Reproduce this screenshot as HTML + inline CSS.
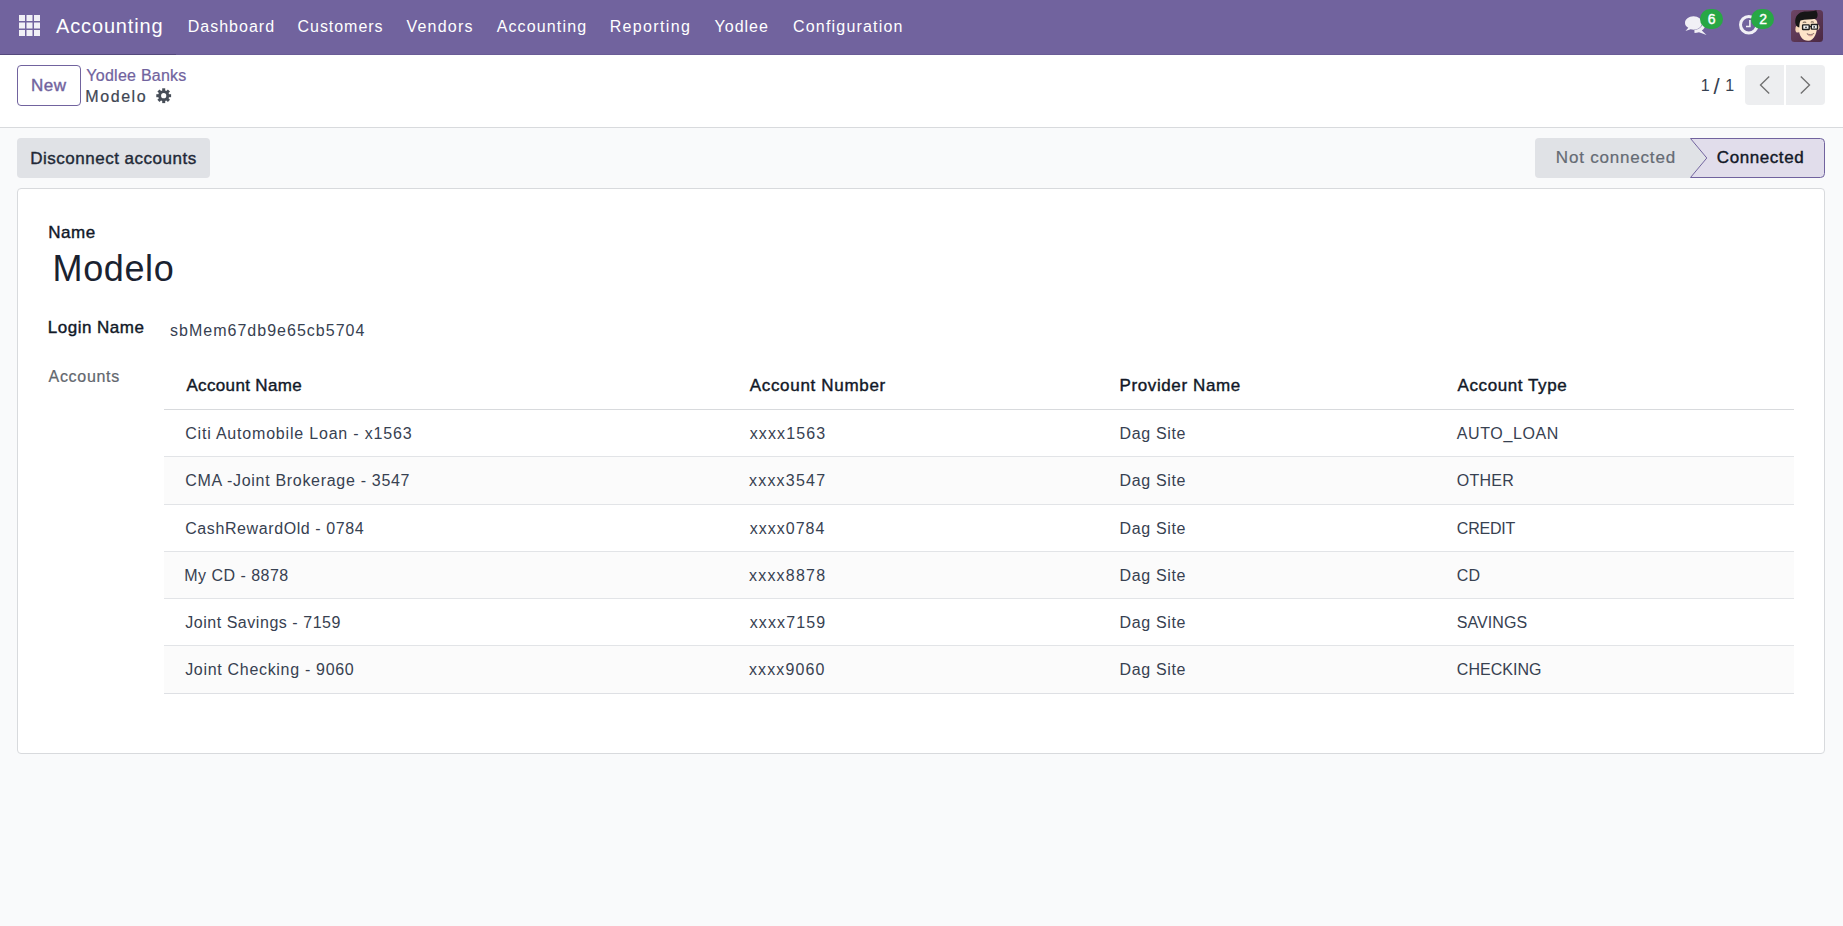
<!DOCTYPE html>
<html><head><meta charset="utf-8">
<style>
html,body{margin:0;padding:0;width:1843px;height:926px;overflow:hidden;background:#f9fafb;font-family:"Liberation Sans",sans-serif;}
.t{position:absolute;white-space:nowrap;}
.r{position:absolute;}
</style></head><body>
<!-- navbar -->
<div class="r" style="left:0;top:0;width:1843px;height:55px;background:#71639e"></div>
<div class="r" style="left:0;top:54px;width:1843px;height:1px;background:#6a5c96"></div>
<div class="r" style="left:0;top:54px;width:176px;height:1px;background:#54497c"></div>
<svg class="r" style="left:19px;top:15px" width="21" height="21" viewBox="0 0 21 21">
<g fill="#f1f0f6">
<rect x="0" y="0" width="6" height="6"/><rect x="7.5" y="0" width="6" height="6"/><rect x="15" y="0" width="6" height="6"/>
<rect x="0" y="7.5" width="6" height="6"/><rect x="7.5" y="7.5" width="6" height="6"/><rect x="15" y="7.5" width="6" height="6"/>
<rect x="0" y="15" width="6" height="6"/><rect x="7.5" y="15" width="6" height="6"/><rect x="15" y="15" width="6" height="6"/>
</g></svg>
<!-- chat icon -->
<svg class="r" style="left:1680px;top:10px" width="32" height="30" viewBox="0 0 32 30">
<g fill="#f1f0f6">
<path d="M14,9 C20,9 25,11.5 25,15.5 C25,17.5 23.8,19.2 21.8,20.4 L26.5,25 L19,22.3 C17.5,22.7 16,22.9 14.5,22.9 Z"/>
<ellipse cx="13.5" cy="13" rx="9" ry="6.9" fill="#71639e"/>
<path d="M13.5,6.3 C18.2,6.3 22,9.3 22,13 C22,16.7 18.2,19.7 13.5,19.7 C12.5,19.7 11.5,19.6 10.6,19.3 L5.5,21 L8.3,17.8 C6.2,16.6 5,14.9 5,13 C5,9.3 8.8,6.3 13.5,6.3 Z"/>
</g></svg>
<!-- clock icon -->
<svg class="r" style="left:1736px;top:12px" width="26" height="26" viewBox="0 0 26 26">
<circle cx="12.8" cy="12.8" r="8.3" fill="none" stroke="#f1f0f6" stroke-width="3"/>
<path d="M13.9,8 V14.5 H10" fill="none" stroke="#f1f0f6" stroke-width="1.6"/>
</svg>
<!-- badges -->
<div class="r" style="left:1700px;top:8.7px;width:23px;height:20.4px;border-radius:11px;background:#28a745"></div>
<div class="r" style="left:1751px;top:8.7px;width:23px;height:20.4px;border-radius:11px;background:#28a745"></div>
<!-- avatar -->
<svg class="r" style="left:1791px;top:10px" width="32" height="32" viewBox="0 0 32 32">
<defs><linearGradient id="ag" x1="0" y1="0" x2="1" y2="1"><stop offset="0" stop-color="#6d4565"/><stop offset="1" stop-color="#4b2943"/></linearGradient></defs>
<rect x="0" y="0" width="32" height="32" rx="3.5" fill="url(#ag)"/>
<ellipse cx="6.6" cy="19.2" rx="2.2" ry="3.4" fill="#f5d5b8"/>
<ellipse cx="26.9" cy="17.3" rx="1.5" ry="2.8" fill="#f5d5b8"/>
<path d="M7.8,11 C8,8.5 11,8 16.5,8 C22.5,8 26.3,9 26.3,13 C26.6,22 23.5,30.8 17.2,30.8 C11.5,30.8 8,26 7.8,19 Z" fill="#fde4c8"/>
<path d="M4.3,13 C3.6,6.5 7.5,2.2 13.5,1.6 C18,1.2 22,1.6 25.5,0.2 C25.2,1.5 26.8,2.8 26.6,5 C26.4,7.5 25.8,8.6 24.5,8.8 C20,9.5 14,9.2 9.5,10.5 C8.6,12.5 8.4,15 8.3,17.5 C6.5,17 4.7,15.5 4.3,13 Z" fill="#161616"/>
<path d="M11.8,12.6 C12.8,12 14.2,12 15.2,12.5 M19.8,12.2 C20.8,11.7 22,11.8 22.8,12.3" stroke="#3a2a22" stroke-width="0.9" fill="none"/>
<rect x="11.6" y="14.9" width="6.6" height="4.6" rx="0.6" fill="#f4f4f4" stroke="#1e1e1e" stroke-width="1.4"/>
<rect x="20.3" y="14.5" width="6.2" height="4.6" rx="0.6" fill="#f4f4f4" stroke="#1e1e1e" stroke-width="1.4"/>
<path d="M18.2,16.6 H20.3" stroke="#1e1e1e" stroke-width="1.1"/>
<circle cx="15" cy="17.3" r="0.9" fill="#333"/><circle cx="23.2" cy="16.9" r="0.9" fill="#333"/>
<path d="M16,23.6 C18,25 21,24.9 22.8,23.3 C22.2,25.6 16.8,25.9 16,23.6 Z" fill="#fff" stroke="#6b4a44" stroke-width="0.6"/>
<path d="M17.5,25.4 C19,26.1 20.6,26 21.6,25.2" stroke="#d98e8e" stroke-width="0.8" fill="none"/>
</svg>
<!-- control panel -->
<div class="r" style="left:0;top:55px;width:1843px;height:72px;background:#fff"></div>
<div class="r" style="left:0;top:127px;width:1843px;height:1px;background:#d8dadd"></div>
<div class="r" style="left:17px;top:65px;width:62px;height:39px;border:1px solid #71639e;border-radius:4px;box-sizing:content-box"></div>
<!-- gear -->
<svg class="r" style="left:155px;top:87px" width="17" height="17" viewBox="-8.7 -8.7 17 17">
<g fill="#474e58">
<circle r="5.5"/>
<rect x="-1.5" y="-7.4" width="3" height="14.8"/>
<rect x="-1.5" y="-7.4" width="3" height="14.8" transform="rotate(45)"/>
<rect x="-1.5" y="-7.4" width="3" height="14.8" transform="rotate(90)"/>
<rect x="-1.5" y="-7.4" width="3" height="14.8" transform="rotate(135)"/>
</g>
<circle r="2.6" fill="#fff"/>
</svg>
<!-- pager -->
<div class="r" style="left:1745px;top:65px;width:39px;height:40px;background:#edeef0;border-radius:4px 0 0 4px"></div>
<div class="r" style="left:1786px;top:65px;width:39px;height:40px;background:#edeef0;border-radius:0 4px 4px 0"></div>
<svg class="r" style="left:1755px;top:72px" width="20" height="26" viewBox="0 0 20 26">
<path d="M14.2,4.5 L5.5,13 L14.2,21.5" fill="none" stroke="#707070" stroke-width="1.35"/></svg>
<svg class="r" style="left:1796px;top:72px" width="20" height="26" viewBox="0 0 20 26">
<path d="M4.8,4.5 L13.5,13 L4.8,21.5" fill="none" stroke="#707070" stroke-width="1.35"/></svg>

<!-- action row -->
<div class="r" style="left:17px;top:138px;width:193px;height:40px;background:#e0e2e6;border-radius:4px"></div>
<svg class="r" style="left:1535px;top:138px" width="290" height="40" viewBox="0 0 290 40">
<path d="M4,0 H155 L171.5,20 L155,40 H4 Q0,40 0,36 V4 Q0,0 4,0 Z" fill="#e0e2e6"/>
<path d="M155.5,0.5 H285.5 Q289.5,0.5 289.5,4.5 V35.5 Q289.5,39.5 285.5,39.5 H155.5 L171.8,20 Z" fill="#e1ddeb" stroke="#71639e" stroke-width="1"/>
</svg>

<!-- card -->
<div class="r" style="left:17px;top:188px;width:1806px;height:564px;background:#fff;border:1px solid #d8dadd;border-radius:4px;box-sizing:content-box"></div>
<!-- table lines & stripes -->
<div class="r" style="left:164px;top:457px;width:1630px;height:47px;background:#fbfbfb"></div>
<div class="r" style="left:164px;top:552px;width:1630px;height:46px;background:#fbfbfb"></div>
<div class="r" style="left:164px;top:646px;width:1630px;height:47px;background:#fbfbfb"></div>
<div class="r" style="left:164px;top:409px;width:1630px;height:1px;background:#d8dadd"></div>
<div class="r" style="left:164px;top:456px;width:1630px;height:1px;background:#e2e4e7"></div>
<div class="r" style="left:164px;top:504px;width:1630px;height:1px;background:#e2e4e7"></div>
<div class="r" style="left:164px;top:551px;width:1630px;height:1px;background:#e2e4e7"></div>
<div class="r" style="left:164px;top:598px;width:1630px;height:1px;background:#e2e4e7"></div>
<div class="r" style="left:164px;top:645px;width:1630px;height:1px;background:#e2e4e7"></div>
<div class="r" style="left:164px;top:693px;width:1630px;height:1px;background:#dee0e4"></div>

<div class="t" style="left:56.08px;top:16.47px;font-size:20px;line-height:20px;letter-spacing:0.839px;color:#ffffff;">Accounting</div>
<div class="t" style="left:187.72px;top:19.25px;font-size:16px;line-height:16px;letter-spacing:1.011px;color:#ffffff;">Dashboard</div>
<div class="t" style="left:297.56px;top:19.25px;font-size:16px;line-height:16px;letter-spacing:0.954px;color:#ffffff;">Customers</div>
<div class="t" style="left:406.46px;top:19.25px;font-size:16px;line-height:16px;letter-spacing:1.228px;color:#ffffff;">Vendors</div>
<div class="t" style="left:496.64px;top:19.25px;font-size:16px;line-height:16px;letter-spacing:1.142px;color:#ffffff;">Accounting</div>
<div class="t" style="left:609.72px;top:19.25px;font-size:16px;line-height:16px;letter-spacing:1.340px;color:#ffffff;">Reporting</div>
<div class="t" style="left:714.54px;top:19.25px;font-size:16px;line-height:16px;letter-spacing:1.001px;color:#ffffff;">Yodlee</div>
<div class="t" style="left:793.00px;top:19.25px;font-size:16px;line-height:16px;letter-spacing:1.191px;color:#ffffff;">Configuration</div>
<div class="t" style="left:1707.80px;top:12.25px;font-size:14px;line-height:14px;letter-spacing:0.000px;color:#ffffff;-webkit-text-stroke:0.4px #ffffff;">6</div>
<div class="t" style="left:1759.20px;top:12.25px;font-size:14px;line-height:14px;letter-spacing:0.000px;color:#ffffff;-webkit-text-stroke:0.4px #ffffff;">2</div>
<div class="t" style="left:31.08px;top:76.81px;font-size:17px;line-height:17px;letter-spacing:0.414px;color:#71639e;-webkit-text-stroke:0.4px #71639e;">New</div>
<div class="t" style="left:86.36px;top:68.05px;font-size:16px;line-height:16px;letter-spacing:0.249px;color:#71639e;-webkit-text-stroke:0.22px #71639e;">Yodlee Banks</div>
<div class="t" style="left:85.36px;top:88.95px;font-size:16px;line-height:16px;letter-spacing:1.556px;color:#3f4754;-webkit-text-stroke:0.22px #3f4754;">Modelo</div>
<div class="t" style="left:1700.70px;top:78.15px;font-size:16px;line-height:16px;letter-spacing:0.000px;color:#374151;">1</div>
<div class="t" style="left:1713.60px;top:76.07px;font-size:22px;line-height:22px;letter-spacing:0.000px;color:#374151;">/</div>
<div class="t" style="left:1725.30px;top:78.15px;font-size:16px;line-height:16px;letter-spacing:0.000px;color:#374151;">1</div>
<div class="t" style="left:30.18px;top:149.71px;font-size:17px;line-height:17px;letter-spacing:0.511px;color:#1f2937;-webkit-text-stroke:0.4px #1f2937;">Disconnect accounts</div>
<div class="t" style="left:1555.82px;top:149.31px;font-size:17px;line-height:17px;letter-spacing:0.804px;color:#656b74;-webkit-text-stroke:0.22px #656b74;">Not connected</div>
<div class="t" style="left:1716.82px;top:149.31px;font-size:17px;line-height:17px;letter-spacing:0.573px;color:#111827;-webkit-text-stroke:0.4px #111827;">Connected</div>
<div class="t" style="left:48.26px;top:223.71px;font-size:17px;line-height:17px;letter-spacing:0.556px;color:#111827;-webkit-text-stroke:0.4px #111827;">Name</div>
<div class="t" style="left:52.56px;top:251.32px;font-size:36px;line-height:36px;letter-spacing:0.606px;color:#1a2230;">Modelo</div>
<div class="t" style="left:47.82px;top:318.71px;font-size:17px;line-height:17px;letter-spacing:0.492px;color:#111827;-webkit-text-stroke:0.4px #111827;">Login Name</div>
<div class="t" style="left:170.00px;top:322.65px;font-size:16px;line-height:16px;letter-spacing:1.013px;color:#374151;">sbMem67db9e65cb5704</div>
<div class="t" style="left:48.60px;top:368.85px;font-size:16px;line-height:16px;letter-spacing:0.678px;color:#62676e;-webkit-text-stroke:0.22px #62676e;">Accounts</div>
<div class="t" style="left:186.44px;top:377.01px;font-size:17px;line-height:17px;letter-spacing:0.345px;color:#111827;-webkit-text-stroke:0.4px #111827;">Account Name</div>
<div class="t" style="left:749.72px;top:377.01px;font-size:17px;line-height:17px;letter-spacing:0.682px;color:#111827;-webkit-text-stroke:0.4px #111827;">Account Number</div>
<div class="t" style="left:1119.54px;top:377.01px;font-size:17px;line-height:17px;letter-spacing:0.607px;color:#111827;-webkit-text-stroke:0.4px #111827;">Provider Name</div>
<div class="t" style="left:1457.62px;top:377.01px;font-size:17px;line-height:17px;letter-spacing:0.579px;color:#111827;-webkit-text-stroke:0.4px #111827;">Account Type</div>
<div class="t" style="left:185.18px;top:425.95px;font-size:16px;line-height:16px;letter-spacing:0.807px;color:#374151;">Citi Automobile Loan - x1563</div>
<div class="t" style="left:749.72px;top:425.95px;font-size:16px;line-height:16px;letter-spacing:1.121px;color:#374151;">xxxx1563</div>
<div class="t" style="left:1119.54px;top:425.95px;font-size:16px;line-height:16px;letter-spacing:0.647px;color:#374151;">Dag Site</div>
<div class="t" style="left:1456.82px;top:425.95px;font-size:16px;line-height:16px;letter-spacing:0.616px;color:#374151;">AUTO_LOAN</div>
<div class="t" style="left:185.18px;top:473.45px;font-size:16px;line-height:16px;letter-spacing:0.691px;color:#374151;">CMA -Joint Brokerage - 3547</div>
<div class="t" style="left:748.92px;top:473.45px;font-size:16px;line-height:16px;letter-spacing:1.235px;color:#374151;">xxxx3547</div>
<div class="t" style="left:1119.54px;top:473.45px;font-size:16px;line-height:16px;letter-spacing:0.647px;color:#374151;">Dag Site</div>
<div class="t" style="left:1456.82px;top:473.45px;font-size:16px;line-height:16px;letter-spacing:0.229px;color:#374151;">OTHER</div>
<div class="t" style="left:185.18px;top:520.85px;font-size:16px;line-height:16px;letter-spacing:0.597px;color:#374151;">CashRewardOld - 0784</div>
<div class="t" style="left:749.72px;top:520.85px;font-size:16px;line-height:16px;letter-spacing:1.006px;color:#374151;">xxxx0784</div>
<div class="t" style="left:1119.54px;top:520.85px;font-size:16px;line-height:16px;letter-spacing:0.647px;color:#374151;">Dag Site</div>
<div class="t" style="left:1456.82px;top:520.85px;font-size:16px;line-height:16px;letter-spacing:-0.228px;color:#374151;">CREDIT</div>
<div class="t" style="left:184.18px;top:567.85px;font-size:16px;line-height:16px;letter-spacing:0.489px;color:#374151;">My CD - 8878</div>
<div class="t" style="left:748.92px;top:567.85px;font-size:16px;line-height:16px;letter-spacing:1.235px;color:#374151;">xxxx8878</div>
<div class="t" style="left:1119.54px;top:567.85px;font-size:16px;line-height:16px;letter-spacing:0.647px;color:#374151;">Dag Site</div>
<div class="t" style="left:1456.82px;top:567.85px;font-size:16px;line-height:16px;letter-spacing:0.085px;color:#374151;">CD</div>
<div class="t" style="left:185.18px;top:615.25px;font-size:16px;line-height:16px;letter-spacing:0.541px;color:#374151;">Joint Savings - 7159</div>
<div class="t" style="left:749.72px;top:615.25px;font-size:16px;line-height:16px;letter-spacing:1.121px;color:#374151;">xxxx7159</div>
<div class="t" style="left:1119.54px;top:615.25px;font-size:16px;line-height:16px;letter-spacing:0.647px;color:#374151;">Dag Site</div>
<div class="t" style="left:1456.82px;top:615.25px;font-size:16px;line-height:16px;letter-spacing:0.061px;color:#374151;">SAVINGS</div>
<div class="t" style="left:185.18px;top:662.25px;font-size:16px;line-height:16px;letter-spacing:0.689px;color:#374151;">Joint Checking - 9060</div>
<div class="t" style="left:748.92px;top:662.25px;font-size:16px;line-height:16px;letter-spacing:1.121px;color:#374151;">xxxx9060</div>
<div class="t" style="left:1119.54px;top:662.25px;font-size:16px;line-height:16px;letter-spacing:0.647px;color:#374151;">Dag Site</div>
<div class="t" style="left:1456.82px;top:662.25px;font-size:16px;line-height:16px;letter-spacing:0.036px;color:#374151;">CHECKING</div>
</body></html>
